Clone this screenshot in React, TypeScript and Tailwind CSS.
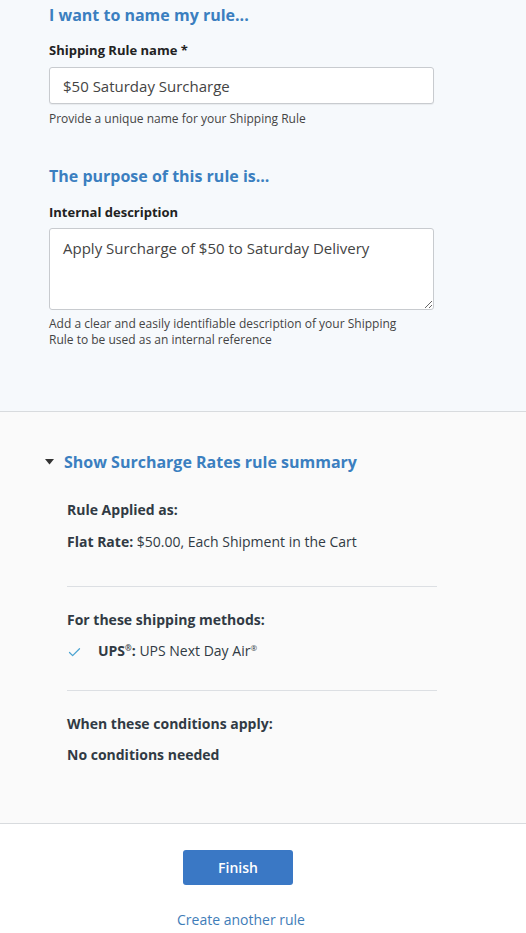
import { Check } from 'lucide-react';

const font = { fontFamily: '"Open Sans", Lato, "Liberation Sans", sans-serif' };

function Divider() {
  return <div className="h-px bg-[#dcdfe3] w-[370px]" />;
}

export default function App() {
  return (
    <div className="w-[526px] min-h-[933px] bg-white text-[#313a44]" style={font}>
      {/* Name + purpose */}
      <section className="bg-[#f6f9fc] border-b border-[#d8dbde] px-[49px] pt-[5px] pb-[63px]">
        <h2 className="text-[16px] font-bold text-[#3b7fc0] leading-[20px]">I want to name my rule...</h2>

        <label className="block mt-[17px] text-[13px] font-bold text-[#222] leading-[16px]">Shipping Rule name *</label>
        <input
          readOnly
          value="$50 Saturday Surcharge"
          className="mt-[9px] w-[385px] h-[37px] bg-white border border-[#c8cbcf] rounded-[3px] px-[13px] text-[15px] text-[#444] shadow-[0_1px_1px_rgba(0,0,0,0.06)] outline-none"
        />
        <p className="mt-[7px] text-[12px] text-[#444] leading-[16px]">Provide a unique name for your Shipping Rule</p>

        <h2 className="mt-[39px] text-[16px] font-bold text-[#3b7fc0] leading-[20px]">The purpose of this rule is...</h2>

        <label className="block mt-[18px] text-[13px] font-bold text-[#222] leading-[16px]">Internal description</label>
        <textarea
          readOnly
          value="Apply Surcharge of $50 to Saturday Delivery"
          className="block mt-[8px] w-[385px] h-[82px] bg-white border border-[#c8cbcf] rounded-[3px] px-[13px] py-[8px] text-[15px] text-[#444] outline-none resize-y"
        />
        <p className="mt-[6px] w-[370px] text-[12px] text-[#444] leading-[16px]">
          Add a clear and easily identifiable description of your Shipping Rule to be used as an internal reference
        </p>
      </section>

      {/* Summary */}
      <section className="bg-[#fafafa] border-b border-[#d8dbde] pl-[45px] pt-[40px] pb-[59px]">
        <button className="flex items-center gap-[10px] text-[16px] font-bold text-[#3b7fc0] leading-[20px]">
          <svg width="9" height="6" viewBox="0 0 9 6"><path d="M0 0h9L4.5 5.5z" fill="#333" /></svg>
          Show Surcharge Rates rule summary
        </button>

        <div className="pl-[22px] pt-[29px]">
          <p className="text-[14px] font-bold leading-[18px]">Rule Applied as:</p>
          <p className="mt-[14px] text-[14px] leading-[18px]">
            <span className="font-bold">Flat Rate:</span> $50.00, Each Shipment in the Cart
          </p>
          <div className="mt-[35px]"><Divider /></div>

          <p className="mt-[24px] text-[14px] font-bold leading-[18px]">For these shipping methods:</p>
          <div className="mt-[13px] flex items-center text-[14px] leading-[18px]">
            <Check size={15} strokeWidth={2} className="text-[#4aa3d1] mr-[16px] shrink-0" />
            <span>
              <span className="font-bold">UPS<span className="relative top-[-5px] text-[8px]">®</span>:</span> UPS Next Day Air<span className="relative top-[-5px] text-[8px]">®</span>
            </span>
          </div>
          <div className="mt-[28px]"><Divider /></div>

          <p className="mt-[24px] text-[14px] font-bold leading-[18px]">When these conditions apply:</p>
          <p className="mt-[13px] text-[14px] font-bold leading-[18px]">No conditions needed</p>
        </div>
      </section>

      {/* Actions */}
      <div className="flex flex-col items-center pt-[26px] pb-[10px]">
        <button className="w-[110px] h-[35px] rounded-[3px] bg-[#3a78c5] text-white text-[14px] font-semibold ml-[-50px]">Finish</button>
        <a className="mt-[24px] text-[14px] text-[#3f7db8] ml-[-44px]">Create another rule</a>
      </div>
    </div>
  );
}
